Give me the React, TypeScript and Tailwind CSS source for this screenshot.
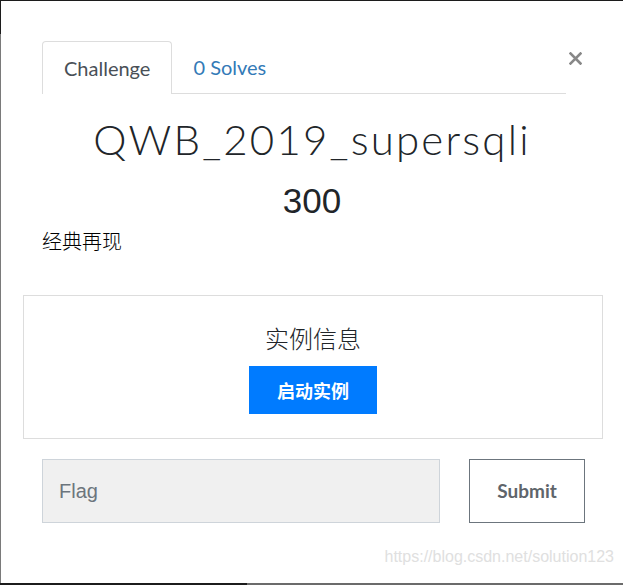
export default function App() {
  return (
    <div className="relative flex h-[585px] w-[623px] flex-col overflow-hidden bg-white">
      {/* window frame, top */}
      <div className="h-px w-full bg-[#1c1c1c]" />

      <div className="flex flex-1">
        {/* window frame, left */}
        <div className="flex w-px flex-col">
          <div className="h-[33px] bg-[#1c1c1c]" />
          <div className="flex-1 bg-[#7a7a7a]" />
        </div>

        {/* modal */}
        <div className="flex-1 bg-white font-['Lato','Liberation_Sans',sans-serif]">
          {/* tabs + close */}
          <div className="flex items-start pl-[41px] pt-[40px]">
            <div className="flex w-[524px] border-b border-[#dddddd]">
              <div className="-mb-px flex h-[53px] items-center rounded-t-[4px] border border-b-0 border-[#dddddd] bg-white px-[21px] text-[20px] text-[#495057]">
                Challenge
              </div>
              <div className="flex h-[52px] items-center px-[21px] text-[20px] text-[#337ab7]">
                0 Solves
              </div>
            </div>
            <button className="ml-[3px] mt-[11px] h-[13px] w-[13px] text-[#888888]">
              <svg viewBox="0 0 13 13" className="h-[13px] w-[13px]">
                <path d="M1.5 1.5 L11.5 11.5 M11.5 1.5 L1.5 11.5" stroke="currentColor" strokeWidth="2.6" strokeLinecap="square" />
              </svg>
            </button>
          </div>

          {/* title */}
          <h1 className="mt-[20px] text-center text-[42px] font-light leading-[50px] tracking-[2.2px] text-[#212529]">
            QWB_2019_supersqli
          </h1>
          <div className="mt-[16px] text-center font-['Liberation_Sans',sans-serif] text-[35px] font-normal leading-[42px] text-[#212529]">
            300
          </div>
          <p className="mt-[4px] pl-[41px] font-['Noto_Sans_CJK_SC',sans-serif] text-[20px] font-light leading-[30px] text-black">
            经典再现
          </p>

          {/* instance box */}
          <div className="ml-[22px] mt-[39px] flex w-[580px] flex-col items-center border border-[#dddddd] pb-[24px] pt-[24px]">
            <div className="font-['Noto_Sans_CJK_SC',sans-serif] text-[24px] font-light leading-[36px] text-[#212529]">
              实例信息
            </div>
            <button className="mt-[10px] flex h-[48px] w-[128px] items-center justify-center bg-[#007bff] font-['Noto_Sans_CJK_SC',sans-serif] text-[18px] font-bold text-white">
              启动实例
            </button>
          </div>

          {/* flag form */}
          <div className="mt-[20px] flex pl-[41px]">
            <div className="flex h-[64px] w-[398px] items-center border border-[#ced4da] bg-[#f0f0f0] px-4 font-['Liberation_Sans',sans-serif] text-[20px] text-[#6c757d]">
              Flag
            </div>
            <button className="ml-[29px] flex h-[64px] w-[116px] items-center justify-center border border-[#6c757d] bg-white text-[19px] font-bold text-[#5f656b]">
              Submit
            </button>
          </div>
        </div>
      </div>

      {/* window frame, bottom */}
      <div className="flex h-[2px] w-full">
        <div className="w-[247px] bg-[#1c1c1c]" />
        <div className="flex-1 bg-[#6b6b6b]" />
      </div>

      {/* watermark */}
      <div className="absolute bottom-[18px] right-[9px] font-['Liberation_Sans',sans-serif] text-[16px] leading-[20px] text-[#e0e0e0]">
        https://blog.csdn.net/solution123
      </div>
    </div>
  )
}
